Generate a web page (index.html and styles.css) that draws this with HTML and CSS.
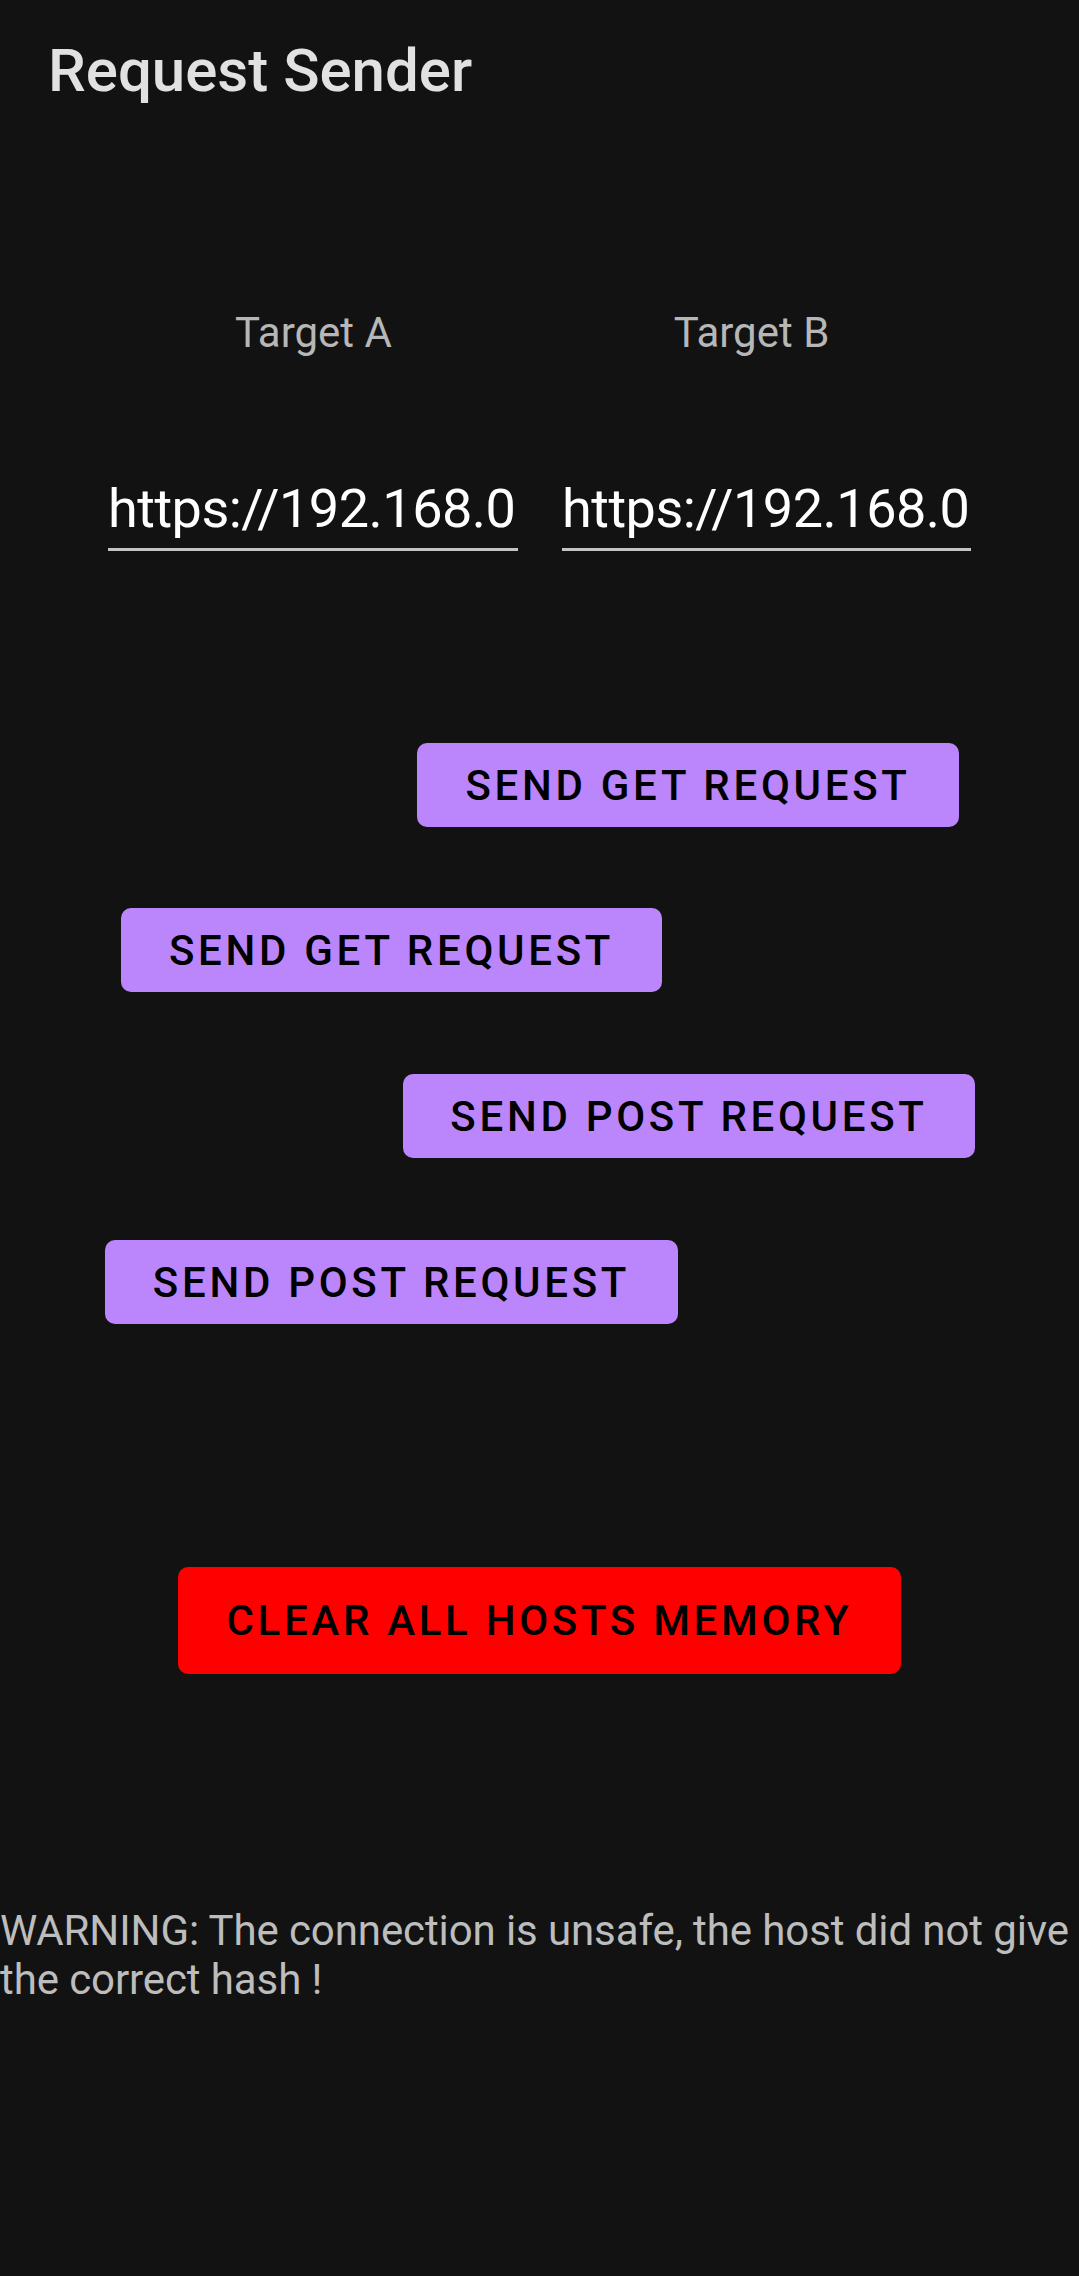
FILE: index.html
```html
<!DOCTYPE html>
<html lang="en">
<head>
<meta charset="utf-8">
<title>Request Sender</title>
<link rel="stylesheet" href="styles.css">
</head>
<body>
<div class="screen">
  <header class="toolbar">
    <h1 class="title">Request Sender</h1>
  </header>

  <div class="labels">
    <div class="label">Target A</div>
    <div class="label label-b">Target B</div>
  </div>

  <div class="inputs">
    <input class="field field-a" type="text" value="https://192.168.0">
    <input class="field field-b" type="text" value="https://192.168.0">
  </div>

  <div class="actions">
    <button class="btn btn-primary btn-1">SEND GET REQUEST</button>
    <button class="btn btn-primary btn-2">SEND GET REQUEST</button>
    <button class="btn btn-primary btn-3">SEND POST REQUEST</button>
    <button class="btn btn-primary btn-4">SEND POST REQUEST</button>
    <button class="btn btn-danger">CLEAR ALL HOSTS MEMORY</button>
  </div>

  <p class="warning">WARNING: The connection is unsafe, the host did not give the correct hash !</p>
</div>
</body>
</html>
```

FILE: styles.css
```css
html, body {
  margin: 0;
  padding: 0;
  background: #121212;
}

body {
  width: 1079px;
  min-height: 2276px;
  font-family: Roboto, "Noto Sans", "Liberation Sans", sans-serif;
}

.screen {
  display: flex;
  flex-direction: column;
}

.toolbar {
  padding: 36px 0 0 48px;
}

.title {
  margin: 0;
  font-size: 60px;
  line-height: 70px;
  font-weight: 500;
  color: #e1e1e1;
}

.labels {
  display: flex;
  gap: 27px;
  padding-left: 108px;
  margin-top: 202px;
}

.label {
  width: 411px;
  text-align: center;
  font-size: 42px;
  line-height: 49px;
  color: #b7b7b7;
}

.inputs {
  display: flex;
  gap: 44px;
  padding-left: 108px;
  margin-top: 120px;
}

.field {
  box-sizing: border-box;
  width: 410px;
  height: 74px;
  margin: 0;
  padding: 0 0 8px 0;
  border: 0;
  border-bottom: 3px solid #c4c4c4;
  background: transparent;
  color: #ffffff;
  font-family: Roboto, "Noto Sans", "Liberation Sans", sans-serif;
  font-size: 54px;
  line-height: 63px;
  letter-spacing: -0.5px;
  outline: none;
}

.field-b {
  width: 409px;
}

.actions {
  display: flex;
  flex-direction: column;
  align-items: flex-start;
  margin-top: 192px;
}

.btn {
  box-sizing: border-box;
  height: 84px;
  padding: 0 51px;
  border: 0;
  border-radius: 10px;
  font-family: Roboto, "Noto Sans", "Liberation Sans", sans-serif;
  font-size: 42px;
  font-weight: 500;
  letter-spacing: 3.7px;
  color: #000000;
  display: flex;
  align-items: center;
  justify-content: center;
  white-space: nowrap;
}

.btn-primary {
  background: #bb86fc;
}

.btn-1 { margin-left: 417px; width: 542px; }
.btn-2 { margin-left: 121px; width: 541px; margin-top: 81px; }
.btn-3 { margin-left: 403px; width: 572px; margin-top: 82px; }
.btn-4 { margin-left: 105px; width: 573px; margin-top: 82px; }

.btn-danger {
  align-self: center;
  width: 723px;
  height: 107px;
  margin-top: 243px;
  background: #ff0000;
}

.warning {
  margin: 232px 0 0 0;
  font-size: 42px;
  line-height: 49px;
  letter-spacing: -0.1px;
  color: #bdbdbd;
}
```
